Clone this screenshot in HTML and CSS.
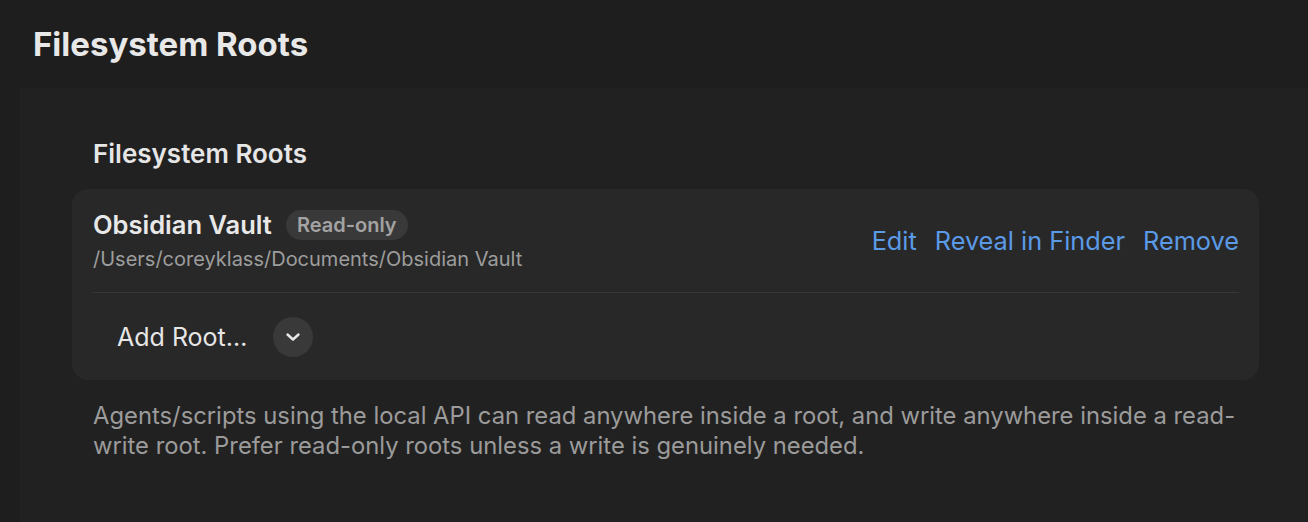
FILE: index.html
```html
<!DOCTYPE html>
<html lang="en">
<head>
<meta charset="utf-8">
<title>Filesystem Roots</title>
<link rel="stylesheet" href="styles.css">
</head>
<body>
<div class="page">
  <h1 class="page-title">Filesystem Roots</h1>
  <div class="panel">
    <h2 class="section-title">Filesystem Roots</h2>
    <div class="card">
      <div class="root-row">
        <div class="root-info">
          <div class="root-name-line">
            <span class="root-name">Obsidian Vault</span>
            <span class="badge">Read-only</span>
          </div>
          <div class="root-path">/Users/coreyklass/Documents/Obsidian Vault</div>
        </div>
        <div class="root-actions">
          <a class="link">Edit</a>
          <a class="link">Reveal in Finder</a>
          <a class="link">Remove</a>
        </div>
      </div>
      <div class="divider"></div>
      <div class="add-row">
        <span class="add-label">Add Root…</span>
        <span class="chevron-btn">
          <svg width="16" height="16" viewBox="0 0 16 16" fill="none" stroke="#e8e8e8" stroke-width="2.4" stroke-linecap="round" stroke-linejoin="round"><path d="M2.5 5.5 L8 10.5 L13.5 5.5"/></svg>
        </span>
      </div>
    </div>
    <p class="footnote">Agents/scripts using the local API can read anywhere inside a root, and write anywhere inside a read-write root. Prefer read-only roots unless a write is genuinely needed.</p>
  </div>
</div>
</body>
</html>
```
FILE: styles.css
```css
html, body {
  margin: 0;
  padding: 0;
  background: #1f1e1e;
  height: 100%;
  overflow: hidden;
}
body {
  font-family: Inter, "Noto Sans", "Liberation Sans", sans-serif;
  color: #e6e6e6;
}
.page {
  padding-top: 24px;
}
.page-title {
  margin: 0 0 0 33px;
  font-size: 33px;
  line-height: 40px;
  font-weight: 700;
  color: #e8e8e8;
}
.panel {
  box-sizing: border-box;
  margin-left: 20px;
  margin-top: 24px;
  background: #222121;
  padding: 50px 49px 0 52px;
  height: calc(100vh - 88px);
}
.section-title {
  margin: 0 0 0 21px;
  font-size: 26px;
  line-height: 32px;
  font-weight: 600;
  color: #e6e6e6;
}
.card {
  margin-top: 19px;
  background: #282828;
  border-radius: 16px;
  padding: 0 20px 0 21px;
}
.root-row {
  display: flex;
  align-items: center;
  justify-content: space-between;
  padding: 21px 0 21px;
}
.root-name-line {
  display: flex;
  align-items: center;
  gap: 14px;
}
.root-name {
  font-size: 25.5px;
  font-weight: 600;
  color: #e8e8e8;
  line-height: 30px;
}
.badge {
  font-size: 20px;
  font-weight: 600;
  color: #a3a3a3;
  background: #393939;
  border-radius: 15px;
  padding: 0 11px;
  line-height: 30px;
}
.root-path {
  font-size: 20px;
  color: #9d9d9d;
  line-height: 24px;
  margin-top: 7px;
}
.root-actions {
  display: flex;
  gap: 18px;
}
.link {
  font-size: 25.3px;
  line-height: 30px;
  color: #5b9ae6;
  cursor: pointer;
}
.divider {
  height: 1px;
  background: #363636;
}
.add-row {
  display: flex;
  align-items: center;
  gap: 26px;
  padding: 24px 0 23px 24px;
}
.add-label {
  font-size: 25px;
  line-height: 30px;
  color: #e6e6e6;
}
.chevron-btn {
  width: 40px;
  height: 40px;
  border-radius: 50%;
  background: #393939;
  display: flex;
  align-items: center;
  justify-content: center;
}
.footnote {
  margin: 21px 0 0 21px;
  font-size: 23.8px;
  line-height: 30px;
  color: #9b9b9b;
}
```
